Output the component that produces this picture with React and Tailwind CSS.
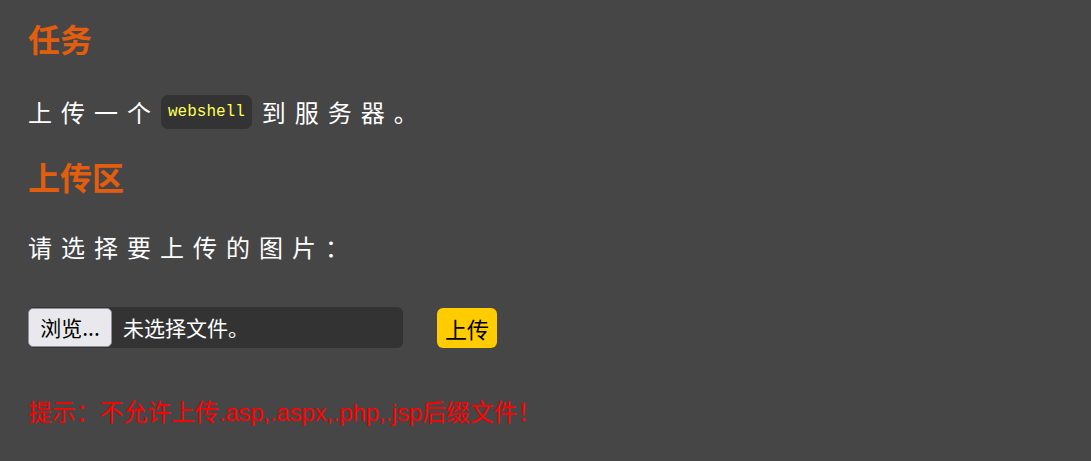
export default function App() {
  const cjk = { fontFamily: '"Noto Sans CJK SC", "Noto Sans", sans-serif' };
  return (
    <div className="min-h-[461px] w-full bg-[#464646] pl-[28px] pt-[22px]" style={cjk}>
      <h2 className="h-[32px] text-[32px] leading-[32px] font-bold text-[#e35d0e]">任务</h2>
      <div className="mt-[41px] flex h-[34px] items-center text-[24px] leading-[24px] tracking-[9px] text-white">
        <span>上传一个</span>
        <code className="ml-[1px] rounded-[7px] bg-[#333333] px-[7px] py-[8px] text-[16px] leading-[18px] font-normal tracking-normal text-[#ffff55]" style={{ fontFamily: '"Liberation Mono", "Courier New", monospace' }}>webshell</code>
        <span className="ml-[10px]">到服务器。</span>
      </div>
      <h2 className="mt-[31px] h-[32px] text-[32px] leading-[32px] font-bold text-[#e35d0e]">上传区</h2>
      <p className="mt-[43px] h-[24px] text-[24px] leading-[24px] tracking-[9px] text-white">请选择要上传的图片：</p>
      <div className="mt-[48px] flex items-center gap-[34px]">
        <div className="flex h-[41px] w-[375px] items-center rounded-[6px] bg-[#333333]">
          <span className="flex h-[39px] w-[84px] items-center justify-center rounded-[5px] border border-[#8f8f9d] bg-[#e9e9ed] text-[21px] leading-[21px] text-black">浏览...</span>
          <span className="ml-[11px] text-[21px] leading-[21px] text-white">未选择文件。</span>
        </div>
        <button className="flex h-[40px] w-[60px] items-center justify-center rounded-[6px] bg-[#ffcc00] text-[22px] leading-[22px] text-black">上传</button>
      </div>
      <p className="mt-[53px] text-[24px] leading-[24px] tracking-[-0.17px] text-[#ff0000]" style={{ fontFamily: '"Liberation Sans", "Noto Sans CJK SC", sans-serif' }}>提示：不允许上传.asp,.aspx,.php,.jsp后缀文件！</p>
    </div>
  );
}
